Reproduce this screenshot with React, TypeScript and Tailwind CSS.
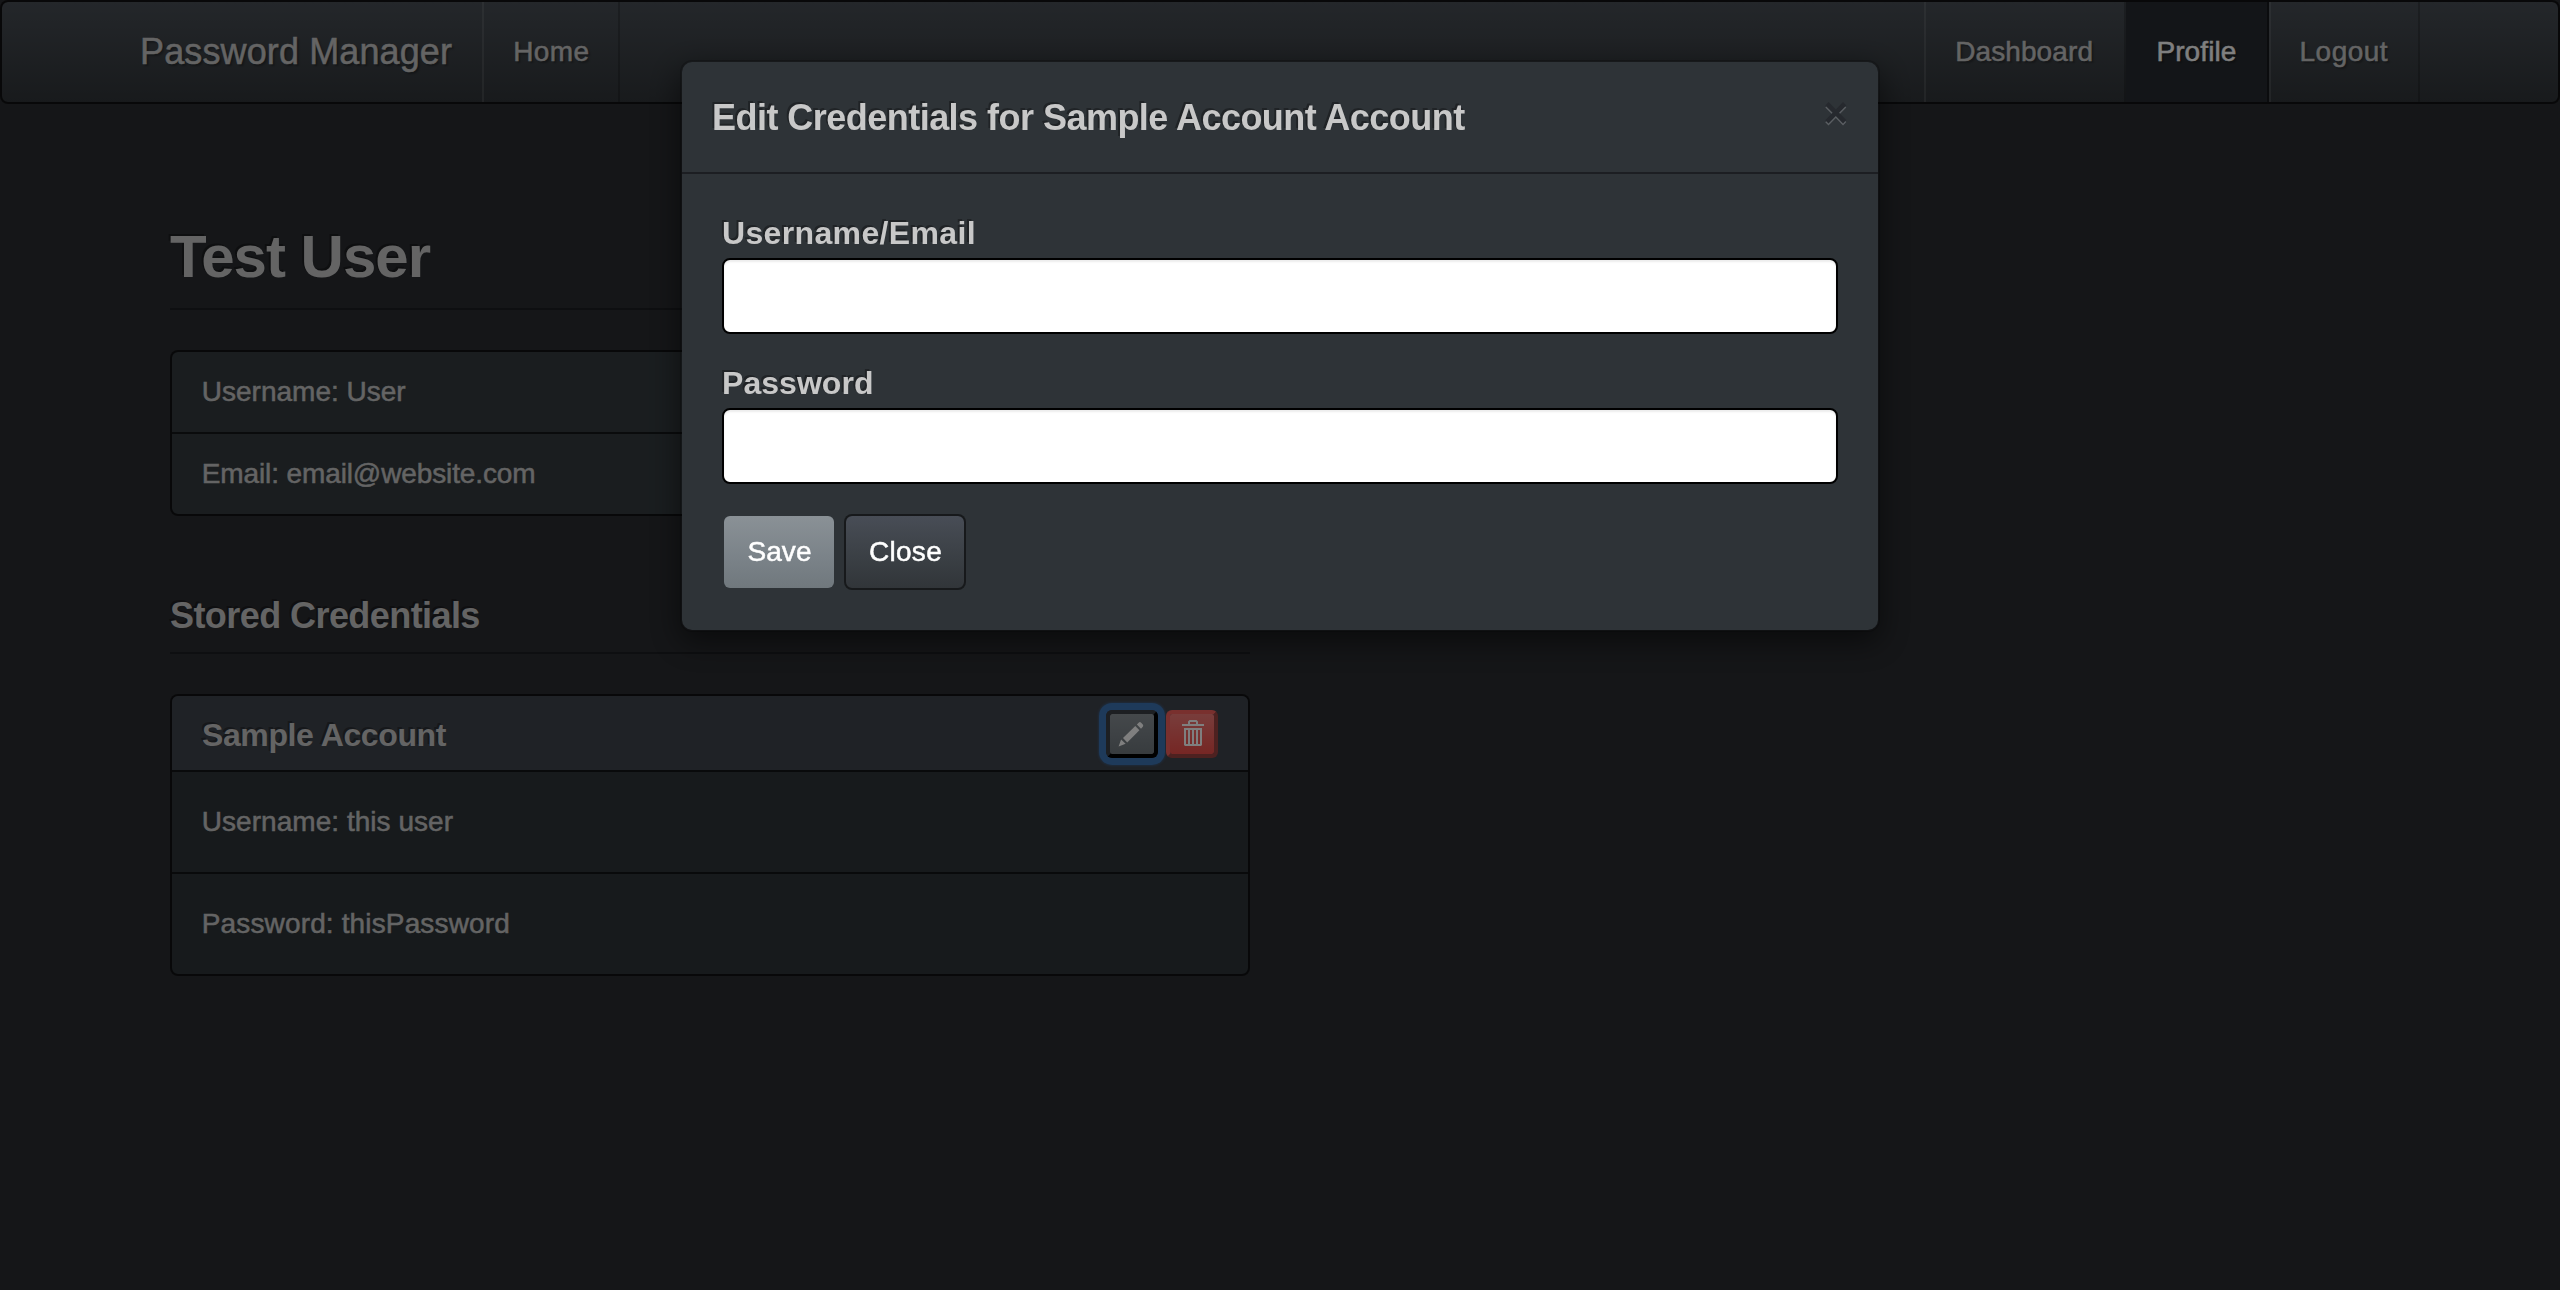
import type { ReactNode } from 'react';

function PencilIcon() {
  return (
    <svg viewBox="0 0 44 40" className="block h-10 w-11 fill-white" aria-hidden="true">
      <path d="M26.9 10.4 28.9 8.4Q29.9 7.5 30.9 8.5L32.8 10.6Q33.7 11.7 32.8 12.7L31 14.7Z" />
      <path d="M25.3 12 29.4 16.3 17.2 28.4 13 24.1Z" />
      <path d="M11.1 25.4 15.6 29.8 8.6 32.4Z" />
    </svg>
  );
}

function TrashIcon() {
  return (
    <svg viewBox="0 0 44 40" className="block h-10 w-11 fill-white" aria-hidden="true">
      <path d="M18 10V7.5L19.5 6H26.5L28 7.5V10H34V12H12V10ZM20 10H26V8H20Z" fillRule="evenodd" />
      <path
        d="M14 14H32V31L31 32H15L14 31ZM16 16V30H18V16ZM20 16V30H22V16ZM24 16V30H26V16ZM28 16V30H30V16Z"
        fillRule="evenodd"
      />
    </svg>
  );
}

const headingShadow = '[text-shadow:-2px_-2px_0_rgba(0,0,0,0.3)]';
const navShadow = '[text-shadow:2px_2px_2px_rgba(0,0,0,0.3)]';
const bodyStroke = '[-webkit-text-stroke-width:0.5px]';

function Navbar() {
  return (
    <nav
      className={`flex h-[104px] justify-between rounded-lg border-2 border-black/60 bg-linear-to-b from-[#484e55] via-[#3a3f44] via-60% to-[#313539] bg-clip-padding pl-[108px] pr-[138px] text-[28px] leading-[100px] whitespace-nowrap text-[#c8c8c8] ${navShadow} ${bodyStroke}`}
    >
      <div className="flex">
        <a className="w-[372px] pl-[30px] text-[36px] tracking-[0.12px]">Password Manager</a>
        <a className="w-[138px] border-r-2 border-l-2 border-r-black/20 border-l-white/10 pl-[29.2px] tracking-[0.4px]">
          Home
        </a>
      </div>
      <div className="flex">
        <a className="w-[202px] border-r-2 border-l-2 border-r-black/20 border-l-white/10 pl-[29.2px] tracking-[0.1px]">
          Dashboard
        </a>
        <a className="w-[143px] border-r-2 border-r-black/40 bg-[#272b30] pl-[30.4px] tracking-[0.1px] text-white">
          Profile
        </a>
        <a className="w-[151px] border-r-2 border-l-2 border-r-black/20 border-l-white/10 pl-[28.6px] tracking-[0.45px]">
          Logout
        </a>
      </div>
    </nav>
  );
}

function AccountPanel() {
  return (
    <section className="mt-10 rounded-lg border-2 border-black/60 bg-[#2e3539] bg-clip-padding">
      <header className="flex h-[74px] items-start justify-between rounded-t-md bg-[#3f444c] pl-[30px] pr-[30px] pt-[14px]">
        <h4 className={`mt-[5px] text-[32px] leading-10 font-bold tracking-[-0.4px] ${headingShadow}`}>
          Sample Account
        </h4>
        <div className="flex gap-2">
          <button className="rounded-md border-4 border-t-[#3a3e44] border-r-black border-b-black border-l-[#3a3e44] bg-linear-to-b from-[#8a9196] via-[#7a8288] via-60% to-[#70787d] bg-clip-padding shadow-[0_0_0_7px_#3c74b4,0_0_2px_8px_#3c74b466]">
            <PencilIcon />
          </button>
          <button className="rounded-md border-4 border-t-[#f2605c] border-r-[#9a4240] border-b-[#9a4240] border-l-[#f2605c] bg-linear-to-b from-[#f17a77] via-[#ee5f5b] via-60% to-[#ec4d49] bg-clip-padding">
            <TrashIcon />
          </button>
        </div>
      </header>
      <p className={`h-[102px] border-t-2 border-black/60 pl-[29.8px] text-[28px] leading-[100px] tracking-[0.04px] ${bodyStroke}`}>
        Username: this user
      </p>
      <p className={`h-[102px] border-t-2 border-black/60 pl-[29.8px] text-[28px] leading-[100px] tracking-[0.14px] ${bodyStroke}`}>
        Password: thisPassword
      </p>
    </section>
  );
}

function ProfilePage() {
  return (
    <main className="ml-[170px] mt-[120px] w-[1080px] text-[#c8c8c8]">
      <h1
        className={`h-[86px] border-b-2 border-[#1c1e22] text-[60px] leading-[66px] font-bold tracking-[-1px] ${headingShadow}`}
      >
        Test User
      </h1>
      <ul className={`mt-10 rounded-lg border-2 border-black/60 bg-[#343b3f] bg-clip-padding text-[28px] leading-[80px] ${bodyStroke}`}>
        <li className="h-[82px] border-b-2 border-black/60 pl-[29.8px]">Username: User</li>
        <li className="pl-[29.8px] tracking-[-0.12px]">Email: email@website.com</li>
      </ul>
      <h3
        className={`mt-20 h-[58px] border-b-2 border-[#1c1e22] text-[36px] leading-10 font-bold tracking-[-0.57px] ${headingShadow}`}
      >
        Stored Credentials
      </h3>
      <AccountPanel />
    </main>
  );
}

function Field({ id, type, children }: { id: string; type: string; children: ReactNode }) {
  return (
    <div className="mb-[30px]">
      <label htmlFor={id} className={`mb-1.5 block text-[32px] leading-[38px] font-bold ${headingShadow}`}>
        {children}
      </label>
      <input
        id={id}
        type={type}
        className="block h-[76px] w-full rounded-lg border-2 border-black bg-white px-6 text-[28px] text-[#272b30] shadow-[inset_0_2px_2px_rgba(0,0,0,0.075)] outline-none"
      />
    </div>
  );
}

function EditDialog() {
  return (
    <div className="fixed inset-0 flex items-start justify-center bg-black/50 pt-[60px]">
      <div
        role="dialog"
        className="w-[1200px] rounded-xl border-2 border-black/20 bg-[#2e3337] bg-clip-padding text-[#c8c8c8] shadow-[0_10px_30px_rgba(0,0,0,0.5)]"
      >
        <div className="flex h-[112px] items-start justify-between border-b-2 border-[#1c1e22] pl-[30px] pr-[30px] pt-[30px]">
          <h4 className={`pt-px text-[36px] leading-[50px] font-bold tracking-[-0.53px] ${headingShadow}`}>
            Edit Credentials for Sample Account Account
          </h4>
          <button className="text-[42px] leading-[42px] font-bold text-[#26292e] [text-shadow:0_2px_0_#5b5f63]">
            ×
          </button>
        </div>
        <form className="p-10">
          <Field id="username" type="text">
            <span className="tracking-[0.35px]">Username/Email</span>
          </Field>
          <Field id="password" type="password">
            <span className="tracking-[0.05px]">Password</span>
          </Field>
          <div className={`flex gap-2 text-[28px] leading-[72px] text-white ${navShadow} ${bodyStroke}`}>
            <button
              type="button"
              className="w-[114px] rounded-lg border-2 border-transparent bg-linear-to-b from-[#8a9196] via-[#7a8288] via-60% to-[#70787d] bg-clip-padding pl-px tracking-[0.1px]"
            >
              Save
            </button>
            <button
              type="button"
              className="w-[122px] rounded-lg border-2 border-black/50 bg-linear-to-b from-[#484d56] via-[#3a3f44] via-60% to-[#313539] bg-clip-padding pl-px tracking-[0.3px]"
            >
              Close
            </button>
          </div>
        </form>
      </div>
    </div>
  );
}

export default function App() {
  return (
    <div className="h-[1290px] overflow-hidden bg-[#2a2c30] font-['Liberation_Sans',Arial,sans-serif]">
      <Navbar />
      <ProfilePage />
      <EditDialog />
    </div>
  );
}
